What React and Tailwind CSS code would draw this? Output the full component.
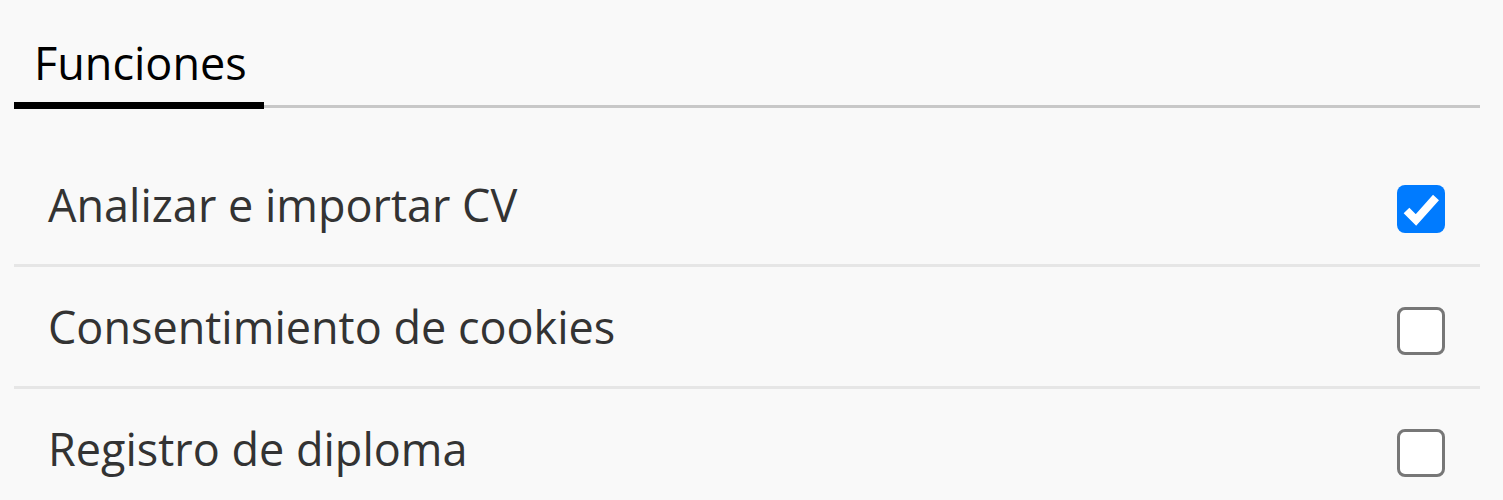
const items = [
  { label: "Analizar e importar CV", checked: true },
  { label: "Consentimiento de cookies", checked: false },
  { label: "Registro de diploma", checked: false },
];

function Checkbox({ checked }) {
  if (checked) {
    return (
      <span className="mt-[9px] flex h-[48px] w-[48px] shrink-0 items-center justify-center rounded-[8px] bg-[#007bff]">
        <svg width="48" height="48" viewBox="0 0 48 48">
          <polyline
            points="9.5,25.5 19,35 39,12.5"
            fill="none"
            stroke="white"
            strokeWidth="8"
          />
        </svg>
      </span>
    );
  }
  return (
    <span className="mt-[9px] block h-[48px] w-[48px] shrink-0 rounded-[8px] border-[3.5px] border-[#777777] bg-white" />
  );
}

export default function App() {
  return (
    <div
      className="h-[500px] w-full overflow-hidden bg-[#f9f9f9] pl-[14px] pr-[23px] pt-[32px]"
      style={{ fontFamily: '"Open Sans", sans-serif' }}
    >
      <div className="flex border-b-[3px] border-[#c8c8c8]">
        <div className="-mb-[4px] w-[250px] border-b-[7px] border-black pb-[9px] pl-[20px] text-[45px] leading-[61px] text-black">
          Funciones
        </div>
      </div>

      <div className="mt-[37px]">
        {items.map((item, i) => (
          <div key={item.label}>
            {i > 0 && <div className="h-[3px] bg-[#e6e6e6]" />}
            <label className="flex h-[119px] items-center justify-between pl-[34px] pr-[35px]">
              <span className="text-[45px] leading-[61px] text-[#333333]">
                {item.label}
              </span>
              <Checkbox checked={item.checked} />
            </label>
          </div>
        ))}
      </div>
    </div>
  );
}
